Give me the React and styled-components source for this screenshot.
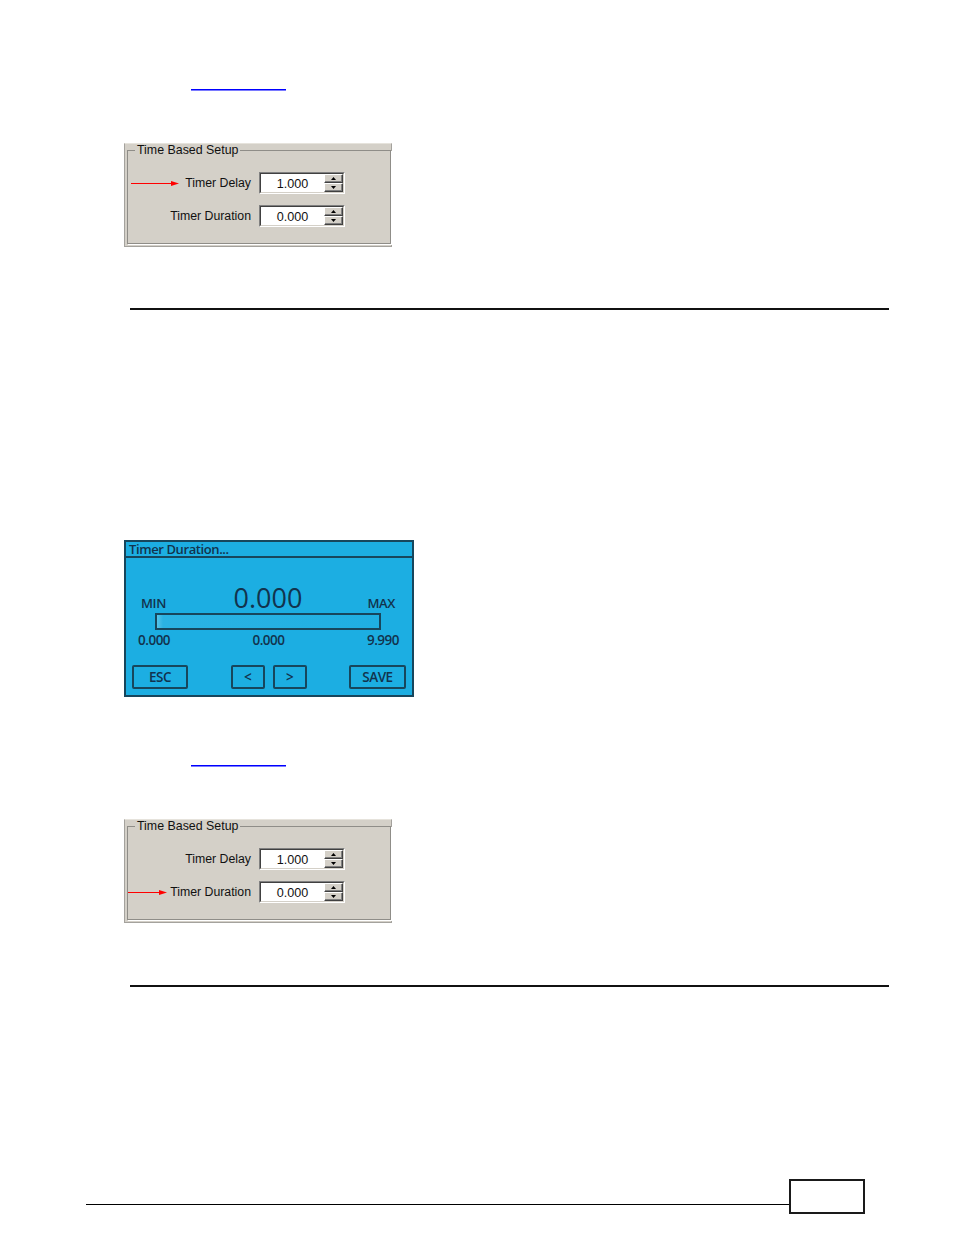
import React from "react";
import styled, { createGlobalStyle } from "styled-components";

const Global = createGlobalStyle`
  *, *::before, *::after { box-sizing: border-box; }
  html, body { margin: 0; padding: 0; background: #fff; }
  body { font-family: "Liberation Sans", Arial, sans-serif; color: #000; }
`;

const Page = styled.div`
  width: 954px;
  min-height: 1235px;
  display: flex;
  flex-direction: column;
  align-items: flex-start;
`;

const LinkLine = styled.a`
  display: block;
  margin-top: ${(p) => p.$top}px;
  margin-left: 191px;
  width: 95px;
  height: 2px;
  background: linear-gradient(#0000ff 0 1px, #7a7aff 1px 2px);
`;

const Panel = styled.div`
  margin-top: ${(p) => p.$top}px;
  margin-left: 124px;
  width: 268px;
  height: 104px;
  background: #d4d0c8;
  border: 1px solid #a4a29d;
  border-top-color: #e6e3dc;
`;

const Group = styled.fieldset`
  margin: 0 0 0 2px;
  width: 264px;
  height: 100px;
  padding: 15px 0 0 0;
  border: 1px solid #8f8d88;
  box-shadow: 1px 1px 0 #ffffff;
`;

const Legend = styled.legend`
  margin-left: 7px;
  padding: 0 2px;
  font-size: 12.4px;
  line-height: 13px;
  color: #111;
`;

const Rows = styled.div`
  display: grid;
  grid-template-columns: 123px 86px;
  column-gap: 8px;
  row-gap: 11px;
`;

const LabelCell = styled.div`
  display: flex;
  align-items: center;
  justify-content: flex-end;
  gap: ${(p) => p.$gap}px;
  font-size: 12.3px;
  color: #111;
  height: 22px;
`;

const Spin = styled.div`
  width: 86px;
  height: 22px;
  display: flex;
  border-top: 1px solid #808080;
  border-left: 1px solid #808080;
  border-bottom: 1px solid #ffffff;
  border-right: 1px solid #ffffff;
`;

const SpinInner = styled.div`
  flex: 1;
  display: flex;
  background: #fff;
  border-top: 1px solid #404040;
  border-left: 1px solid #404040;
  border-bottom: 1px solid #d4d0c8;
  border-right: 1px solid #d4d0c8;
`;

const SpinText = styled.div`
  flex: 1;
  display: flex;
  align-items: center;
  justify-content: center;
  font-size: 12.6px;
  color: #111;
  padding-top: 1px;
`;

const SpinButtons = styled.div`
  width: 19px;
  display: flex;
  flex-direction: column;
`;

const SpinBtn = styled.div`
  flex: 1;
  display: flex;
  align-items: center;
  justify-content: center;
  background: #d4d0c8;
  border-top: 1px solid #ffffff;
  border-left: 1px solid #ffffff;
  border-bottom: 1px solid #404040;
  border-right: 1px solid #404040;
  box-shadow: inset -1px -1px 0 #808080;
`;

const Rule = styled.div`
  margin-top: ${(p) => p.$top}px;
  margin-left: 130px;
  width: 759px;
  height: 2px;
  background: #111;
`;

const Dialog = styled.div`
  margin-top: ${(p) => p.$top}px;
  margin-left: 124px;
  width: 290px;
  height: 157px;
  background: #1caee2;
  border: 2px solid #17465c;
  font-family: "Open Sans", "Noto Sans", sans-serif;
  color: #12334d;
  display: flex;
  flex-direction: column;
`;

const DialogTitle = styled.div`
  height: 16px;
  border-bottom: 2px solid #17465c;
  font-size: 13px;
  font-weight: 600;
  line-height: 14px;
  padding-left: 3px;
  letter-spacing: -0.4px;
`;

const TopRow = styled.div`
  margin-top: 26px;
  padding: 0 17px 0 15px;
  display: grid;
  grid-template-columns: 1fr auto 1fr;
  align-items: baseline;
`;

const Small = styled.span`
  font-size: 13px;
  font-weight: 600;
  line-height: 1;
  justify-self: ${(p) => p.$align};
  letter-spacing: -0.4px;
`;

const BigValue = styled.span`
  font-size: 27px;
  font-weight: 500;
  line-height: 1;
`;

const Bar = styled.div`
  margin: 2px 31px 0 29px;
  height: 17px;
  border: 2px solid #17465c;
  background: linear-gradient(90deg, #56c3e8 0, #2bb3e3 6px, #1fafe2 100%);
`;

const ValuesRow = styled.div`
  margin-top: 2px;
  padding: 0 13px 0 12px;
  display: flex;
  justify-content: space-between;
  font-size: 13.5px;
  font-weight: 600;
  line-height: 16px;
  letter-spacing: -0.5px;
`;

const ButtonsRow = styled.div`
  margin-top: 17px;
  padding: 0 6px;
  display: flex;
  justify-content: space-between;
`;

const NavGroup = styled.div`
  display: flex;
  gap: 8px;
`;

const DlgButton = styled.div`
  width: ${(p) => p.$w}px;
  height: 24px;
  border: 2px solid #17465c;
  border-radius: 2px;
  display: flex;
  align-items: center;
  justify-content: center;
  font-size: 13.5px;
  font-weight: 600;
  letter-spacing: -0.5px;
  color: #12334d;
`;

const Footer = styled.div`
  margin-top: ${(p) => p.$top}px;
  margin-left: 86px;
  display: flex;
  align-items: flex-end;
`;

const FooterLine = styled.div`
  width: 703px;
  height: 1px;
  background: #000;
  margin-bottom: 9px;
`;

const PageBox = styled.div`
  width: 76px;
  height: 35px;
  border: 2px solid #1a1a1a;
`;

function Arrow({ w }) {
  return (
    <svg width={w} height="7" viewBox={`0 0 ${w} 7`}>
      <line x1="0" y1="3.5" x2={w - 6} y2="3.5" stroke="#ff0000" strokeWidth="1.2" />
      <polygon points={`${w - 8},1 ${w},3.5 ${w - 8},6`} fill="#ff0000" />
    </svg>
  );
}

function Tri({ up }) {
  return (
    <svg width="5" height="3" viewBox="0 0 5 3">
      <polygon points={up ? "2.5,0 5,3 0,3" : "0,0 5,0 2.5,3"} fill="#000" />
    </svg>
  );
}

function SpinBox({ value }) {
  return (
    <Spin>
      <SpinInner>
        <SpinText>{value}</SpinText>
        <SpinButtons>
          <SpinBtn><Tri up /></SpinBtn>
          <SpinBtn><Tri /></SpinBtn>
        </SpinButtons>
      </SpinInner>
    </Spin>
  );
}

function SetupPanel({ top, arrowRow }) {
  const rows = [
    { label: "Timer Delay", value: "1.000", arrowW: 48, gap: 6 },
    { label: "Timer Duration", value: "0.000", arrowW: 39, gap: 3 },
  ];
  return (
    <Panel $top={top}>
      <Group>
        <Legend>Time Based Setup</Legend>
        <Rows>
          {rows.map((r, i) => (
            <React.Fragment key={r.label}>
              <LabelCell $gap={r.gap}>
                {arrowRow === i && <Arrow w={r.arrowW} />}
                <span>{r.label}</span>
              </LabelCell>
              <SpinBox value={r.value} />
            </React.Fragment>
          ))}
        </Rows>
      </Group>
    </Panel>
  );
}

export default function App() {
  return (
    <>
      <Global />
      <Page>
        <LinkLine $top={89} href="#" aria-label="link" />
        <SetupPanel top={52} arrowRow={0} />
        <Rule $top={61} />
        <Dialog $top={230}>
          <DialogTitle>Timer Duration...</DialogTitle>
          <TopRow>
            <Small $align="start">MIN</Small>
            <BigValue>0.000</BigValue>
            <Small $align="end">MAX</Small>
          </TopRow>
          <Bar />
          <ValuesRow>
            <span>0.000</span>
            <span>0.000</span>
            <span>9.990</span>
          </ValuesRow>
          <ButtonsRow>
            <DlgButton $w={56}>ESC</DlgButton>
            <NavGroup>
              <DlgButton $w={34}>&lt;</DlgButton>
              <DlgButton $w={34}>&gt;</DlgButton>
            </NavGroup>
            <DlgButton $w={57}>SAVE</DlgButton>
          </ButtonsRow>
        </Dialog>
        <LinkLine $top={68} href="#" aria-label="link" />
        <SetupPanel top={52} arrowRow={1} />
        <Rule $top={62} />
        <Footer $top={192}>
          <FooterLine />
          <PageBox />
        </Footer>
      </Page>
    </>
  );
}
